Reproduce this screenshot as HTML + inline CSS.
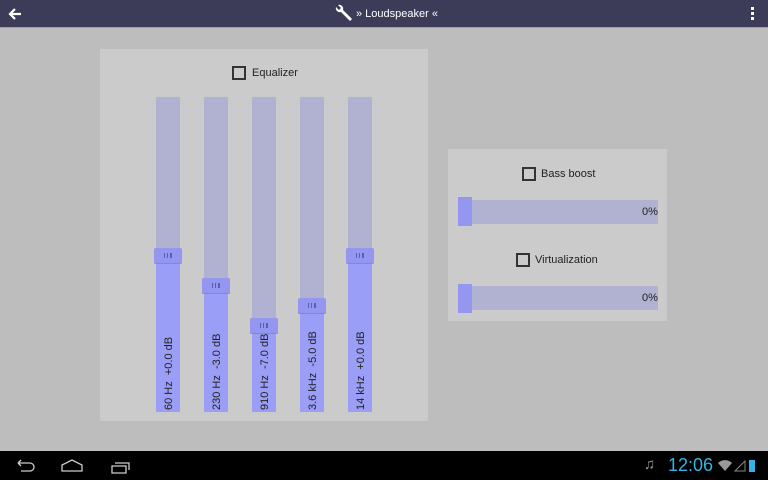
<!DOCTYPE html>
<html><head><style>
*{margin:0;padding:0;box-sizing:border-box}
body{width:768px;height:480px;background:#bdbdbd;position:relative;overflow:hidden;font-family:"Liberation Sans",sans-serif}
.a{position:absolute}
.top{left:0;top:0;width:768px;height:28px;background:#3c3c58;border-bottom:1px solid #c9985a}
.panel{background:#cbcbcb}
.track{background:#b1b2d2;width:24px}
.fill{background:#9b9ef6;width:24px}
.thumb{background:#9497ef;width:28px;height:15px;border-radius:2px;box-shadow:0 1px 0 #8286d8}
.thumb i{position:absolute;left:10px;top:5px;width:8px;height:5px;border-left:1px solid #5a5fb0;border-right:1px solid #5a5fb0}
.thumb i:before{content:"";position:absolute;left:2px;top:0;width:2px;height:5px;border-left:1px solid #5a5fb0;border-right:1px solid #5a5fb0}
.lbl{font-size:11px;color:#222;transform:rotate(-90deg);transform-origin:0 0;white-space:nowrap}
.cb{width:14px;height:14px;border:2px solid #333}
.t{font-size:11px;color:#222}
</style></head><body>
<div class="a top"></div>
<svg class="a" style="left:8px;top:7px" width="14" height="14" viewBox="0 0 14 14"><path d="M13 7H2M7 2L2 7l5 5" stroke="#fff" stroke-width="2.2" fill="none"/></svg>
<svg class="a" style="left:333px;top:4px" width="20" height="20" viewBox="0 0 20 20"><path d="M3 3a4 4 0 0 0 5 5l9 9 2-2-9-9a4 4 0 0 0-5-5l3 3-2 2z" fill="#fff"/></svg>
<div class="a" style="left:356px;top:8px;font-size:11px;color:#fff">» Loudspeaker «</div>
<div class="a" style="left:751px;top:7px;width:3px;height:3px;background:#fff;box-shadow:0 5px #fff,0 10px #fff"></div>

<div class="a panel" style="left:100px;top:49px;width:328px;height:372px"></div>
<div class="a cb" style="left:232px;top:66px"></div>
<div class="a t" style="left:252px;top:67px">Equalizer</div>

<div class="a track" style="left:156px;top:97px;height:315px"></div>
<div class="a fill" style="left:156px;top:255px;height:157px"></div>
<div class="a thumb" style="left:154px;top:248px"><i></i></div>
<div class="a lbl" style="left:163px;top:410px">60 Hz &nbsp;+0.0 dB</div>

<div class="a track" style="left:204px;top:97px;height:315px"></div>
<div class="a fill" style="left:204px;top:285px;height:127px"></div>
<div class="a thumb" style="left:202px;top:278px"><i></i></div>
<div class="a lbl" style="left:211px;top:410px">230 Hz &nbsp;-3.0 dB</div>

<div class="a track" style="left:252px;top:97px;height:315px"></div>
<div class="a fill" style="left:252px;top:325px;height:87px"></div>
<div class="a thumb" style="left:250px;top:318px"><i></i></div>
<div class="a lbl" style="left:259px;top:410px">910 Hz &nbsp;-7.0 dB</div>

<div class="a track" style="left:300px;top:97px;height:315px"></div>
<div class="a fill" style="left:300px;top:305px;height:107px"></div>
<div class="a thumb" style="left:298px;top:298px"><i></i></div>
<div class="a lbl" style="left:307px;top:410px">3.6 kHz &nbsp;-5.0 dB</div>

<div class="a track" style="left:348px;top:97px;height:315px"></div>
<div class="a fill" style="left:348px;top:255px;height:157px"></div>
<div class="a thumb" style="left:346px;top:248px"><i></i></div>
<div class="a lbl" style="left:355px;top:410px">14 kHz &nbsp;+0.0 dB</div>

<div class="a panel" style="left:448px;top:149px;width:219px;height:172px"></div>
<div class="a cb" style="left:522px;top:167px"></div>
<div class="a t" style="left:541px;top:168px">Bass boost</div>
<div class="a" style="left:458px;top:200px;width:200px;height:24px;background:#b1b2d2"></div>
<div class="a" style="left:458px;top:197px;width:14px;height:29px;background:#9497ef"></div>
<div class="a t" style="left:642px;top:206px">0%</div>
<div class="a cb" style="left:516px;top:253px"></div>
<div class="a t" style="left:535px;top:254px">Virtualization</div>
<div class="a" style="left:458px;top:286px;width:200px;height:24px;background:#b1b2d2"></div>
<div class="a" style="left:458px;top:284px;width:14px;height:29px;background:#9497ef"></div>
<div class="a t" style="left:642px;top:292px">0%</div>

<div class="a" style="left:0;top:451px;width:768px;height:29px;background:#000"></div>
<svg class="a" style="left:12px;top:458px" width="120" height="16" viewBox="0 0 120 16"><g stroke="#ccc" stroke-width="1.3" fill="none"><path d="M6 5h12a4 4 0 0 1 0 8H9M6 5l3-3M6 5l3 3"/><path d="M50 13V7l10-5 10 5v6z"/><path d="M100 8h14v7h-14zM103 5h14v7"/></g></svg>
<div class="a" style="left:644px;top:456px;font-size:15px;color:#999">♫</div>
<div class="a" style="left:668px;top:455px;font-size:18px;color:#33b5e5">12:06</div>
<svg class="a" style="left:717px;top:457px" width="48" height="16" viewBox="0 0 48 16"><path d="M1 6a10 10 0 0 1 14 0L8 14z" fill="#999"/><path d="M18 14L28 4v10z" fill="none" stroke="#888"/><rect x="32" y="3" width="6" height="12" fill="#33b5e5"/></svg>
</body></html>
